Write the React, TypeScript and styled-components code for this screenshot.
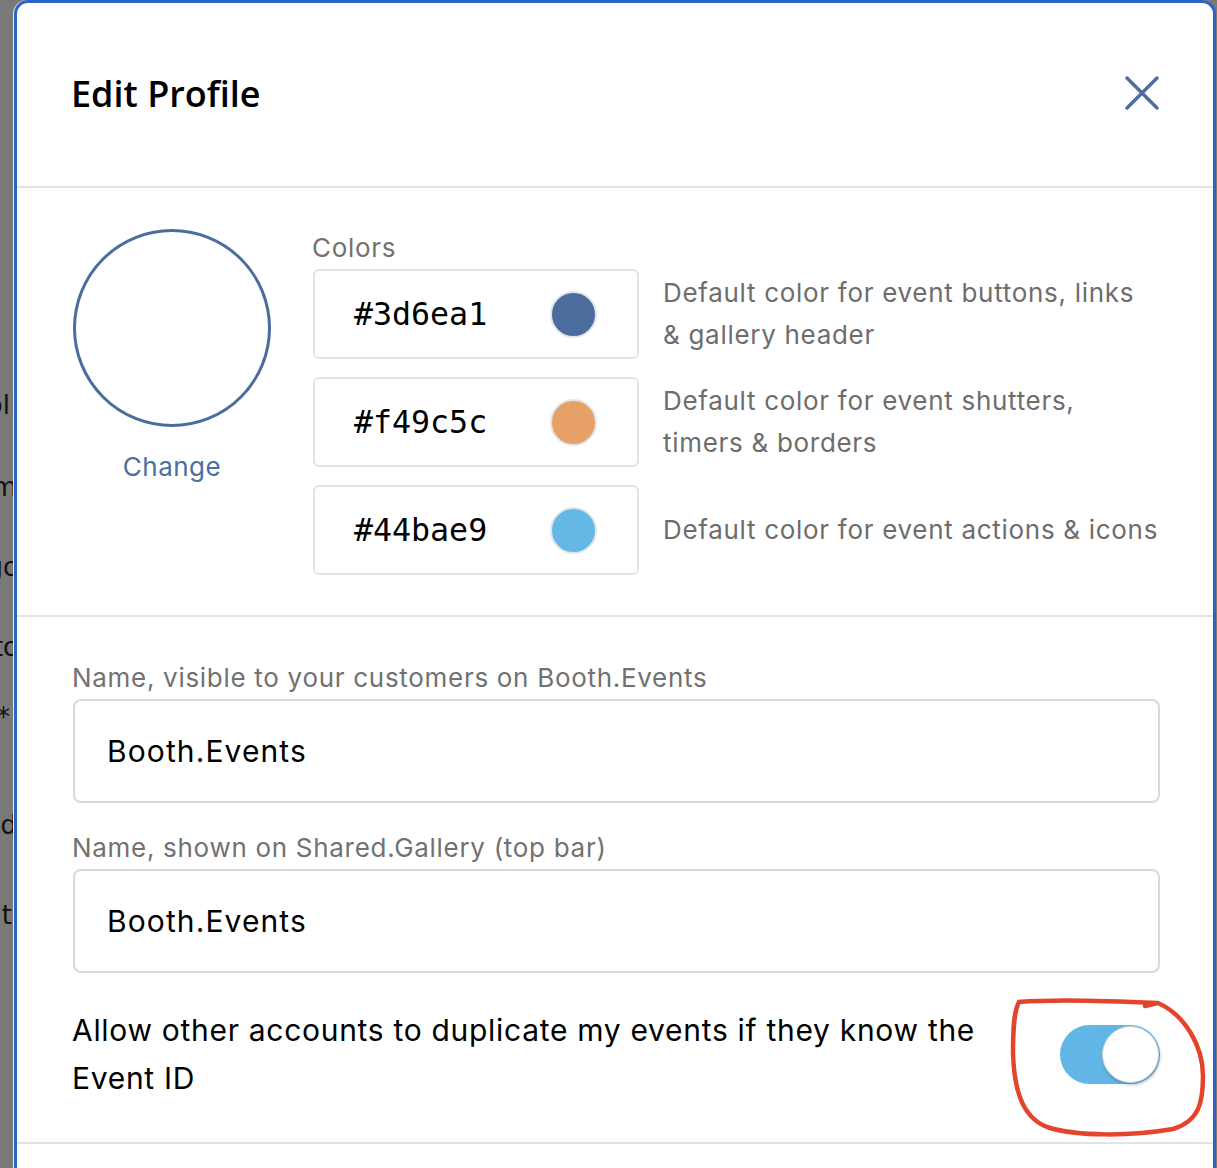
import React, { FunctionComponent, useState } from "react";
import styled, { createGlobalStyle } from "styled-components";

const GlobalStyle = createGlobalStyle`
  html, body {
    margin: 0;
    padding: 0;
    background: #797979;
    overflow: hidden;
  }
  * {
    box-sizing: border-box;
  }
`;

const Page = styled.div`
  display: flex;
  width: 1217px;
  height: 1168px;
  background: #797979;
  overflow: hidden;
  font-family: Inter, "Noto Sans", sans-serif;
`;

// what is left visible of the page behind the dialog
const Backdrop = styled.div`
  width: 13px;
  flex: none;
  overflow: hidden;
  display: flex;
  flex-direction: column;
  align-items: flex-end;
  font-family: "DejaVu Sans", sans-serif;
  font-size: 26px;
  line-height: 30px;
  color: #111;
`;

const BackdropLine = styled.div<{ $gap: number; $shift: number }>`
  margin-top: ${p => p.$gap}px;
  margin-right: ${p => p.$shift}px;
  white-space: nowrap;
`;

const Modal = styled.div`
  width: 1202px;
  height: 1240px;
  flex: none;
  margin-left: 1px;
  background: #fff;
  border: 3px solid #2d62c7;
  border-bottom: none;
  border-radius: 14px 14px 0 0;
  box-shadow: -1px 0 0 #e9e9e9;
  display: flex;
  flex-direction: column;
`;

const Header = styled.div`
  height: 185px;
  flex: none;
  display: flex;
  align-items: center;
  justify-content: space-between;
  padding: 0 54px 3px 54px;
  border-bottom: 2px solid #e3e3e3;
`;

const Title = styled.h1`
  margin: 0;
  font-family: "Open Sans", sans-serif;
  font-size: 36px;
  font-weight: 600;
  color: #000;
  letter-spacing: 0;
`;

const CloseButton = styled.button`
  border: none;
  background: none;
  padding: 0;
  width: 34px;
  height: 34px;
  display: flex;
  cursor: pointer;
`;

const ColorsSection = styled.div`
  display: flex;
  gap: 42px;
  padding: 41px 54px 40px 56px;
  border-bottom: 2px solid #e3e3e3;
`;

const AvatarColumn = styled.div`
  width: 198px;
  flex: none;
  display: flex;
  flex-direction: column;
  align-items: center;
`;

const Avatar = styled.div`
  width: 198px;
  height: 198px;
  border-radius: 50%;
  border: 3px solid #4a6d9e;
  background: #fff;
`;

const ChangeLink = styled.a`
  margin-top: 24px;
  font-size: 26px;
  line-height: 32px;
  letter-spacing: 0.5px;
  color: #4a6fa0;
  cursor: pointer;
`;

const ColorsColumn = styled.div`
  flex: 1;
  padding-top: 4px;
`;

const FieldLabel = styled.div`
  font-size: 26px;
  line-height: 30px;
  letter-spacing: 0.7px;
  color: #717171;
  margin-bottom: 6px;
  margin-left: -1px;
`;

const ColorGrid = styled.div`
  display: grid;
  grid-template-columns: 326px 1fr;
  column-gap: 24px;
  row-gap: 18px;
`;

const ColorBox = styled.div`
  height: 90px;
  border: 2px solid #e3e3e3;
  border-radius: 6px;
  display: flex;
  align-items: center;
  justify-content: space-between;
  padding: 0 40px 0 39px;
`;

const HexValue = styled.span`
  font-family: "DejaVu Sans Mono", monospace;
  font-size: 31.6px;
  color: #000;
`;

const Swatch = styled.span<{ $color: string }>`
  width: 47px;
  height: 47px;
  border-radius: 50%;
  background: ${p => p.$color};
  border: 2px solid #e1e4e8;
`;

const ColorNote = styled.div`
  align-self: center;
  font-size: 26px;
  line-height: 42px;
  letter-spacing: 0.7px;
  color: #6d6d6d;
`;

const NamesSection = styled.div`
  padding: 46px 53px 40px 56px;
  border-bottom: 2px solid #e3e3e3;
`;

const NameField = styled.div`
  margin-bottom: 30px;
`;

const TextInput = styled.input`
  display: block;
  width: 100%;
  height: 104px;
  border: 2px solid #d7dadf;
  border-radius: 8px;
  padding: 0 32px;
  font-family: Inter, "Noto Sans", sans-serif;
  font-size: 30px;
  letter-spacing: 1.1px;
  color: #000;
  background: #fff;
  outline: none;
`;

const ToggleRow = styled.div`
  display: flex;
  align-items: center;
  justify-content: space-between;
  margin-top: 33px;
`;

const ToggleText = styled.div`
  flex: 0 1 945px;
  margin-left: -1px;
  font-size: 30px;
  line-height: 48px;
  letter-spacing: 0.7px;
  color: #000;
`;

const ToggleWrap = styled.div`
  position: relative;
  flex: none;
`;

const Track = styled.button<{ $on: boolean }>`
  width: 100px;
  height: 59px;
  border: none;
  border-radius: 30px;
  padding: 1px;
  display: flex;
  justify-content: ${p => (p.$on ? "flex-end" : "flex-start")};
  align-items: center;
  background: ${p => (p.$on ? "#62b6e5" : "#d0d4d9")};
  cursor: pointer;
`;

const Knob = styled.span`
  width: 57px;
  height: 57px;
  border-radius: 50%;
  background: #fff;
  border: 1px solid #c9d6e0;
  box-shadow: 1px 2px 3px rgba(40, 70, 100, 0.35);
`;

// red hand drawn mark over the switch
const Scribble = styled.svg`
  position: absolute;
  left: -55px;
  top: -34px;
  pointer-events: none;
`;

const backdropLines = [
  { text: "Symbol", gap: 390, shift: 3 },
  { text: "Custom", gap: 52, shift: -4 },
  { text: "Logo", gap: 50, shift: -6 },
  { text: "Photo", gap: 50, shift: -6 },
  { text: "Size *", gap: 40, shift: 3 },
  { text: "Field", gap: 78, shift: -4 },
  { text: "Edit", gap: 60, shift: 1 }
];

const colors = [
  { hex: "#3d6ea1", swatch: "#4a6d9e", note: "Default color for event buttons, links & gallery header" },
  { hex: "#f49c5c", swatch: "#e7a065", note: "Default color for event shutters, timers & borders" },
  { hex: "#44bae9", swatch: "#63b8e6", note: "Default color for event actions & icons" }
];

const App: FunctionComponent = () => {
  const [allowDuplicate, toggleAllowDuplicate] = useState(true);
  const [customerName, setCustomerName] = useState("Booth.Events");
  const [galleryName, setGalleryName] = useState("Booth.Events");

  return (
    <Page>
      <GlobalStyle />
      <Backdrop>
        {backdropLines.map(line => (
          <BackdropLine key={line.text} $gap={line.gap} $shift={line.shift}>
            {line.text}
          </BackdropLine>
        ))}
      </Backdrop>
      <Modal>
        <Header>
          <Title>Edit Profile</Title>
          <CloseButton aria-label="Close">
            <svg width="34" height="34" viewBox="0 0 34 34">
              <path
                d="M2 2 L32 32 M32 2 L2 32"
                stroke="#4a6d9e"
                strokeWidth="3.4"
                strokeLinecap="round"
              />
            </svg>
          </CloseButton>
        </Header>

        <ColorsSection>
          <AvatarColumn>
            <Avatar />
            <ChangeLink>Change</ChangeLink>
          </AvatarColumn>
          <ColorsColumn>
            <FieldLabel>Colors</FieldLabel>
            <ColorGrid>
              {colors.map(color => (
                <React.Fragment key={color.hex}>
                  <ColorBox>
                    <HexValue>{color.hex}</HexValue>
                    <Swatch $color={color.swatch} />
                  </ColorBox>
                  <ColorNote>{color.note}</ColorNote>
                </React.Fragment>
              ))}
            </ColorGrid>
          </ColorsColumn>
        </ColorsSection>

        <NamesSection>
          <NameField>
            <FieldLabel>Name, visible to your customers on Booth.Events</FieldLabel>
            <TextInput value={customerName} onChange={e => setCustomerName(e.target.value)} />
          </NameField>
          <NameField>
            <FieldLabel>Name, shown on Shared.Gallery (top bar)</FieldLabel>
            <TextInput value={galleryName} onChange={e => setGalleryName(e.target.value)} />
          </NameField>
          <ToggleRow>
            <ToggleText>
              Allow other accounts to duplicate my events if they know the Event ID
            </ToggleText>
            <ToggleWrap>
              <Track $on={allowDuplicate} onClick={() => toggleAllowDuplicate(!allowDuplicate)}>
                <Knob />
              </Track>
              <Scribble width="210" height="155" viewBox="0 0 210 155">
                <path
                  d="M14 11 C 50 8, 110 10, 153 12 L 140 15 M 153 12 C 180 24, 198 55, 198 85 C 198 112, 194 130, 168 138 C 128 145, 72 146, 42 136 C 16 126, 9 96, 8 62 C 8 36, 9 20, 14 11"
                  fill="none"
                  stroke="#e4432c"
                  strokeWidth="4.5"
                  strokeLinecap="round"
                  strokeLinejoin="round"
                />
              </Scribble>
            </ToggleWrap>
          </ToggleRow>
        </NamesSection>
      </Modal>
    </Page>
  );
};

export default App;
